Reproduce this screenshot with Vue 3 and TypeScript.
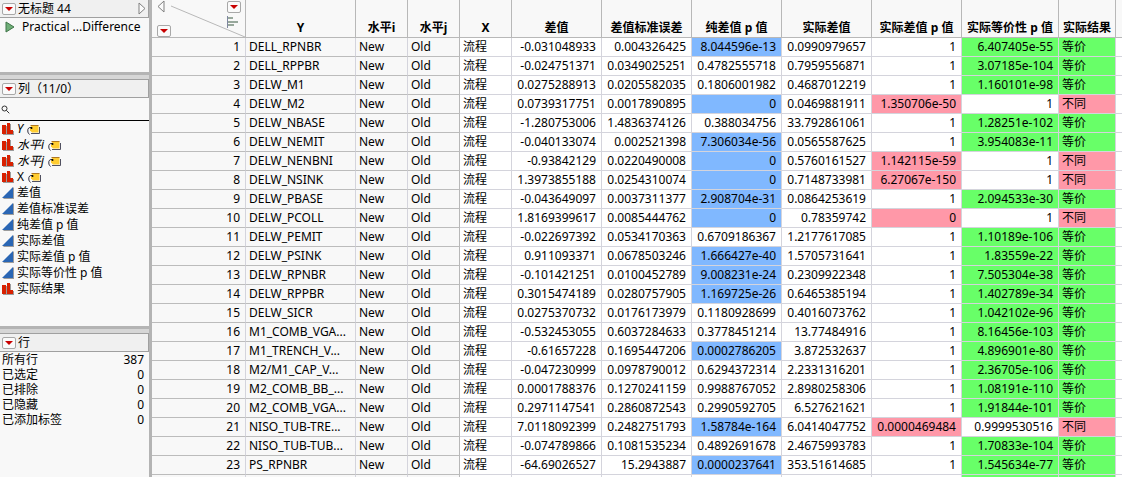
<script setup lang="ts">
interface Column {
  name: string
  kind: 'nominal' | 'continuous'
  label?: boolean
  italic?: boolean
}

const columns: Column[] = [
  { name: 'Y', kind: 'nominal', label: true, italic: true },
  { name: '水平i', kind: 'nominal', label: true, italic: true },
  { name: '水平j', kind: 'nominal', label: true, italic: true },
  { name: 'X', kind: 'nominal', label: true },
  { name: '差值', kind: 'continuous' },
  { name: '差值标准误差', kind: 'continuous' },
  { name: '纯差值 p 值', kind: 'continuous' },
  { name: '实际差值', kind: 'continuous' },
  { name: '实际差值 p 值', kind: 'continuous' },
  { name: '实际等价性 p 值', kind: 'continuous' },
  { name: '实际结果', kind: 'nominal' },
]

const rowCounts: [string, number][] = [
  ['所有行', 387],
  ['已选定', 0],
  ['已排除', 0],
  ['已隐藏', 0],
  ['已添加标签', 0],
]

// Y, difference, standard error, pure p, practical difference, practical p, equivalence p
const rows: string[][] = [
  ['DELL_RPNBR', '-0.031048933', '0.004326425', '8.044596e-13', '0.0990979657', '1', '6.407405e-55'],
  ['DELL_RPPBR', '-0.024751371', '0.0349025251', '0.4782555718', '0.7959556871', '1', '3.07185e-104'],
  ['DELW_M1', '0.0275288913', '0.0205582035', '0.1806001982', '0.4687012219', '1', '1.160101e-98'],
  ['DELW_M2', '0.0739317751', '0.0017890895', '0', '0.0469881911', '1.350706e-50', '1'],
  ['DELW_NBASE', '-1.280753006', '1.4836374126', '0.388034756', '33.792861061', '1', '1.28251e-102'],
  ['DELW_NEMIT', '-0.040133074', '0.002521398', '7.306034e-56', '0.0565587625', '1', '3.954083e-11'],
  ['DELW_NENBNI', '-0.93842129', '0.0220490008', '0', '0.5760161527', '1.142115e-59', '1'],
  ['DELW_NSINK', '1.3973855188', '0.0254310074', '0', '0.7148733981', '6.27067e-150', '1'],
  ['DELW_PBASE', '-0.043649097', '0.0037311377', '2.908704e-31', '0.0864253619', '1', '2.094533e-30'],
  ['DELW_PCOLL', '1.8169399617', '0.0085444762', '0', '0.78359742', '0', '1'],
  ['DELW_PEMIT', '-0.022697392', '0.0534170363', '0.6709186367', '1.2177617085', '1', '1.10189e-106'],
  ['DELW_PSINK', '0.911093371', '0.0678503246', '1.666427e-40', '1.5705731641', '1', '1.83559e-22'],
  ['DELW_RPNBR', '-0.101421251', '0.0100452789', '9.008231e-24', '0.2309922348', '1', '7.505304e-38'],
  ['DELW_RPPBR', '0.3015474189', '0.0280757905', '1.169725e-26', '0.6465385194', '1', '1.402789e-34'],
  ['DELW_SICR', '0.0275370732', '0.0176173979', '0.1180928699', '0.4016073762', '1', '1.042102e-96'],
  ['M1_COMB_VGA...', '-0.532453055', '0.6037284633', '0.3778451214', '13.77484916', '1', '8.16456e-103'],
  ['M1_TRENCH_V...', '-0.61657228', '0.1695447206', '0.0002786205', '3.872532637', '1', '4.896901e-80'],
  ['M2/M1_CAP_V...', '-0.047230999', '0.0978790012', '0.6294372314', '2.2331316201', '1', '2.36705e-106'],
  ['M2_COMB_BB_...', '0.0001788376', '0.1270241159', '0.9988767052', '2.8980258306', '1', '1.08191e-110'],
  ['M2_COMB_VGA...', '0.2971147541', '0.2860872543', '0.2990592705', '6.527621621', '1', '1.91844e-101'],
  ['NISO_TUB-TRE...', '7.0118092399', '0.2482751793', '1.58784e-164', '6.0414047752', '0.0000469484', '0.9999530516'],
  ['NISO_TUB-TUB...', '-0.074789866', '0.1081535234', '0.4892691678', '2.4675993783', '1', '1.70833e-104'],
  ['PS_RPNBR', '-64.69026527', '15.2943887', '0.0000237641', '353.51614685', '1', '1.545634e-77'],
]

const significant = (value: string): boolean => Number(value) < 0.05

function tint(row: string[], index: number): string {
  if (!significant(row[index])) return ''
  if (index === 3) return 'blue'
  if (index === 5) return 'red'
  if (index === 6) return 'green'
  return ''
}
</script>

<template>
  <div class="app">
    <aside class="side">
      <section class="panel source">
        <header class="bar">
          <button class="menu" type="button" aria-label="表菜单"><svg viewBox="0 0 12 10"><path d="M2 3h8L6 7z" /></svg></button>
          <h2>无标题 44</h2>
          <button class="fold" type="button" aria-label="折叠面板">
            <svg viewBox="0 0 8 13"><path d="M1 1v11l6-5.500z" /></svg>
          </button>
        </header>
        <button class="script" type="button">
          <svg viewBox="0 0 10 12"><path d="M1 1v10l8-5z" /></svg>
          <span>Practical ...Difference</span>
        </button>
      </section>

      <section class="panel fields">
        <header class="bar">
          <button class="menu" type="button" aria-label="列菜单"><svg viewBox="0 0 12 10"><path d="M2 3h8L6 7z" /></svg></button>
          <h2>列（11/0）</h2>
        </header>
        <label class="search">
          <svg viewBox="0 0 9 9"><circle cx="3.500" cy="3.500" r="2.500" /><path d="M5.300 5.300L8.300 8.300" /></svg>
          <input type="text" aria-label="搜索列" />
        </label>
        <ul>
          <li v-for="c in columns" :key="c.name">
            <svg v-if="c.kind === 'nominal'" class="kind" viewBox="0 0 13 12">
              <path class="shade" d="M1 3h4V1h4v7h3v4H1z" />
              <path class="bars" d="M0 2h4v9H0zM5 0h3v11H5zM8 7h3v4H8z" />
            </svg>
            <svg v-else class="kind" viewBox="0 0 13 12">
              <path class="shade" d="M1 12L12 0v12z" />
              <path class="ramp" d="M0 11L11 0v11z" />
            </svg>
            <span :class="{ italic: c.italic }">{{ c.name }}</span>
            <svg v-if="c.label" class="tag" viewBox="0 0 14 11">
              <path class="tag-shade" d="M4 9.500h8.500V3" />
              <path class="tag-body" d="M5 1.500h6.500v7H5L3 6.500V3.500z" />
              <path class="tag-edge" d="M3.500 1.500h8" />
              <path class="tag-string" d="M4.500 3.500C2 3 .5 4.500.8 7c0 1.500.7 2.500 1.700 3.500" />
              <circle cx="4.500" cy="4" r="1" />
            </svg>
          </li>
        </ul>
      </section>

      <section class="panel counts">
        <header class="bar">
          <button class="menu" type="button" aria-label="行菜单"><svg viewBox="0 0 12 10"><path d="M2 3h8L6 7z" /></svg></button>
          <h2>行</h2>
        </header>
        <dl>
          <div v-for="[name, count] in rowCounts" :key="name">
            <dt>{{ name }}</dt>
            <dd>{{ count }}</dd>
          </div>
        </dl>
      </section>
    </aside>

    <main class="grid">
      <table>
        <colgroup>
          <col class="w-index" />
          <col class="w-name" />
          <col v-for="n in 3" :key="'s' + n" class="w-short" />
          <col v-for="n in 5" :key="'n' + n" class="w-number" />
          <col class="w-equal" />
          <col class="w-result" />
          <col />
        </colgroup>
        <thead>
          <tr>
            <td class="corner">
              <div class="corner-box">
                <svg class="diagonal" viewBox="0 0 93 37"><path d="M19 6L93 37" /></svg>
                <div class="corner-left">
                  <button class="fold" type="button" aria-label="隐藏侧栏">
                    <svg viewBox="0 0 8 13"><path d="M7 1v11L1 6.500z" /></svg>
                  </button>
                  <button class="menu" type="button" aria-label="行选项"><svg viewBox="0 0 12 10"><path d="M2 3h8L6 7z" /></svg></button>
                </div>
                <div class="corner-right">
                  <button class="menu" type="button" aria-label="列选项"><svg viewBox="0 0 12 10"><path d="M2 3h8L6 7z" /></svg></button>
                  <svg class="histogram" viewBox="0 0 12 12">
                    <path class="axis" d="M0 0h1v12H0z" />
                    <path d="M1 1h5v2H1zM1 5h10v2H1zM1 8h6v2H1z" />
                  </svg>
                </div>
              </div>
            </td>
            <th v-for="c in columns" :key="c.name" scope="col">{{ c.name }}</th>
            <td></td>
          </tr>
        </thead>
        <tbody>
          <tr v-for="(row, i) in rows" :key="row[0]">
            <th class="index" scope="row">{{ i + 1 }}</th>
            <td class="key">{{ row[0] }}</td>
            <td class="key">New</td>
            <td class="key last">Old</td>
            <td>流程</td>
            <td v-for="n in 6" :key="n" class="number" :class="tint(row, n)">{{ row[n] }}</td>
            <td :class="significant(row[6]) ? 'green' : 'red'">{{ significant(row[6]) ? '等价' : '不同' }}</td>
            <td></td>
          </tr>
          <tr>
            <th class="index" scope="row"></th>
            <td class="key"></td>
            <td class="key"></td>
            <td class="key last"></td>
            <td v-for="n in 6" :key="n"></td>
            <td class="green"></td>
            <td class="green"></td>
            <td></td>
          </tr>
        </tbody>
      </table>
    </main>
  </div>
</template>

<style>
body {
  margin: 0;
}
</style>

<style scoped>
.app {
  display: flex;
  height: 100vh;
  overflow: hidden;
  background: #f8f8f8;
  color: #000;
  font: 12px/16px "Noto Sans", "Noto Sans CJK SC", sans-serif;
}
.side {
  display: flex;
  flex: none;
  flex-direction: column;
  box-sizing: border-box;
  width: 152px;
  border-right: 3px solid #b4b4b4;
}
.panel {
  box-sizing: border-box;
}
.panel + .panel {
  border-top: 3px solid #b4b4b4;
}
.panel + .panel::before {
  content: "";
  display: block;
  height: 4px;
  background: #d6d6d6;
}
.source {
  flex: 0 0 72px;
}
.fields {
  flex: 0 0 254px;
}
.counts {
  flex: 1;
}
.bar {
  display: flex;
  align-items: center;
  box-sizing: border-box;
  height: 19px;
  padding-left: 2px;
  border: 1px solid #a0a0a0;
  border-left: 0;
  background: #f0f0f0;
}
.source .bar {
  height: 18px;
  border-top: 0;
}
h2 {
  flex: 1;
  margin: 0 0 0 2px;
  font-size: 12px;
  font-weight: 400;
  line-height: 16px;
  white-space: nowrap;
}
button {
  padding: 0;
  border: 0;
  background: none;
  color: inherit;
  font: inherit;
}
svg {
  display: block;
  flex: none;
}
.menu {
  box-sizing: border-box;
  width: 14px;
  height: 12px;
  border: 1px solid #a8a8a8;
  border-radius: 2px;
  background: #fafafa;
}
.menu svg {
  width: 12px;
  height: 10px;
  fill: #c80000;
}
.fold svg {
  width: 8px;
  height: 13px;
  fill: #fafafa;
  stroke: #808080;
}
.source .fold {
  margin-right: 2px;
}
.script {
  display: flex;
  align-items: center;
  gap: 7px;
  height: 17px;
  padding-left: 5px;
  white-space: nowrap;
}
.script svg {
  width: 10px;
  height: 12px;
  fill: #6fae78;
  stroke: #3f7548;
}
.search {
  display: flex;
  align-items: center;
  height: 22px;
  padding-left: 1px;
  border-bottom: 1px solid #000;
}
.search svg {
  width: 9px;
  height: 9px;
  fill: none;
  stroke: #333;
}
.search input {
  flex: 1;
  min-width: 0;
  height: 18px;
  padding: 0 4px;
  border: 0;
  outline: 0;
  background: transparent;
  font: inherit;
}
ul {
  margin: 0;
  padding: 0;
  list-style: none;
}
li {
  display: flex;
  align-items: center;
  height: 16px;
  padding-left: 2px;
  white-space: nowrap;
}
.kind {
  width: 13px;
  height: 12px;
  margin-right: 2px;
}
.shade {
  fill: #9c9c9c;
}
.bars {
  fill: #d82000;
}
.ramp {
  fill: #2a66b4;
}
.italic {
  font-style: italic;
}
.tag {
  width: 14px;
  height: 11px;
  margin-left: 4px;
}
.tag-shade {
  fill: none;
  stroke: #505060;
}
.tag-body {
  fill: #ffcc30;
}
.tag-edge {
  fill: none;
  stroke: #b07820;
}
.tag-string {
  fill: none;
  stroke: #303040;
}
dl {
  margin: 0;
  padding: 0 5px 0 2px;
}
dl div {
  display: flex;
  justify-content: space-between;
  height: 15px;
}
dd {
  margin: 0;
}
.grid {
  flex: 1;
  min-width: 0;
  overflow: hidden;
}
table {
  width: 100%;
  border-spacing: 0;
  table-layout: fixed;
}
.w-index {
  width: 94px;
}
.w-name {
  width: 110px;
}
.w-short {
  width: 52px;
}
.w-number {
  width: 90px;
}
.w-equal {
  width: 97px;
}
.w-result {
  width: 57px;
}
th,
td {
  box-sizing: border-box;
  padding: 0 3px;
  border-right: 1px solid #d4d4dc;
  border-bottom: 1px solid #d4d4dc;
  overflow: hidden;
  font-weight: 400;
  text-align: left;
  white-space: nowrap;
}
tr > :last-child {
  border-right: 0;
}
tbody tr {
  height: 19px;
}
tbody td,
tbody th {
  height: 19px;
  line-height: 18px;
}
tbody td {
  background: #fff;
}
thead th,
thead td {
  height: 38px;
  padding: 0 0 1px;
  border-color: #b8b8b8;
  font-weight: 700;
  line-height: 16px;
  text-align: center;
  vertical-align: bottom;
}
thead .corner {
  padding: 0;
}
.corner-box {
  display: flex;
  position: relative;
  justify-content: space-between;
  height: 37px;
}
.corner-left,
.corner-right {
  display: flex;
  flex-direction: column;
  align-items: flex-start;
  justify-content: space-between;
  padding: 0 0 0 5px;
}
.corner-right {
  justify-content: flex-start;
  gap: 3px;
  padding: 1px 4px 0 0;
}
.diagonal {
  position: absolute;
  inset: 0;
  width: 93px;
  height: 37px;
  fill: none;
  stroke: #b8b8b8;
}
.histogram {
  width: 12px;
  height: 12px;
  fill: #98a89c;
}
.axis {
  fill: #8088a0;
}
tbody .index {
  padding-right: 5px;
  border-bottom-color: #bcbcbc;
  text-align: right;
}
tbody .key {
  border-bottom-color: #bcbcbc;
  background: #f8f8f8;
}
tbody .last {
  border-right-color: #b8b8b8;
}
tbody .number {
  padding: 0 5px 0 0;
  text-align: right;
}
tbody .blue {
  background: #80b8ff;
}
tbody .red {
  background: #ff98a8;
}
tbody .green {
  background: #68ff68;
}
</style>
